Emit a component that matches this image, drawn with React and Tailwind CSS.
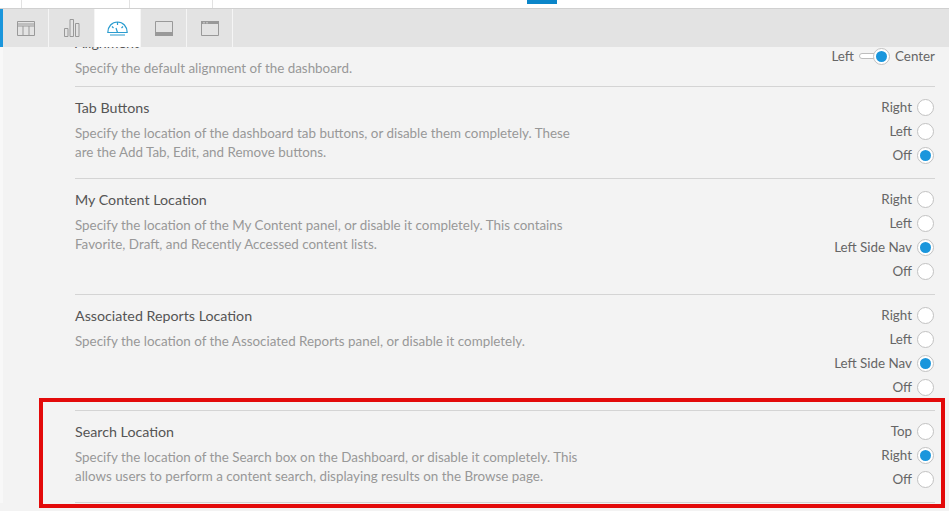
import React from "react";

const Radio = ({ on }) => (
  <span className="flex h-[17px] w-[17px] shrink-0 items-center justify-center rounded-full border border-[#c2c2c2] bg-white">
    {on && <span className="h-[11px] w-[11px] rounded-full bg-[#1a96dc]" />}
  </span>
);

const Row = ({ title, desc, opts, on }) => (
  <div className="flex justify-between border-b border-[#d4d4d4] pt-2 pb-[11px]">
    <div>
      <div className="mt-[3px] text-[14.25px] leading-5 text-[#555]">{title}</div>
      <div className="mt-[6px] w-[505px] text-[13.4px] leading-[19px] text-[#989898]">{desc}</div>
    </div>
    <div className="flex flex-col items-end pr-px">
      {opts.map((o, i) => (
        <div key={o} className="flex h-6 items-center gap-[5px] text-[13.4px] text-[#666]">
          {o}
          <Radio on={i === on} />
        </div>
      ))}
    </div>
  </div>
);

const Tab = ({ active, children }) => (
  <div className={`flex w-[46px] items-center justify-center border-r border-[#f5f5f5] ${active ? "bg-white" : ""}`}>
    {children}
  </div>
);

const stroke = "#999999";

export default function App() {
  return (
    <div className="relative h-[511px] w-[949px] overflow-hidden bg-[#f3f3f3]" style={{ fontFamily: "Lato, sans-serif" }}>
      <div className="relative z-10 flex h-[9px] border-b border-[#d0d0d0] bg-white">
        <div className="w-[22px] border-r border-[#e2e2e2]" />
        <div className="w-[108px] border-r border-[#e2e2e2]" />
        <div className="w-[83px] border-r border-[#e2e2e2]" />
        <div className="ml-[314px] h-1 w-[30px] bg-[#0a85c9]" />
      </div>
      <div className="relative z-10 flex h-[38px] border-l-[3px] border-[#1a96dc] bg-[#e3e3e3]">
        <Tab>
          <svg width="18" height="15" viewBox="0 0 18 15" fill="none" stroke={stroke}>
            <path d="M.5.500h17v14H.5zM.5 3h17M.5 5h17M6 5v9.500M12 5v9.500" />
          </svg>
        </Tab>
        <Tab>
          <svg width="16" height="18" viewBox="0 0 16 18" fill="none" stroke={stroke}>
            <path d="M.5 9.500h3.500v8H.5zM6 .5h3.500v17H6zM11.500 4.500H15v13h-3.500z" />
          </svg>
        </Tab>
        <Tab active>
          <svg width="21" height="15" viewBox="0 0 21 15" fill="none" stroke="#2a9ccf" strokeWidth="1.2">
            <path d="M.8 11.500C.8 5.500 5 1 10.500 1s9.700 4.500 9.700 10.500zM3 14h15M10.500 11.500 9 7M5 5.500l1.500 1.500M16 5.500 14.500 7M10.500 1v3" />
          </svg>
        </Tab>
        <Tab>
          <svg width="18" height="15" viewBox="0 0 18 15" fill="none" stroke={stroke}>
            <path d="M.5.500h17v14H.5z" />
            <path d="M0 11h18v4H0z" fill={stroke} stroke="none" />
          </svg>
        </Tab>
        <Tab>
          <svg width="18" height="15" viewBox="0 0 18 15" fill="none" stroke={stroke}>
            <path d="M.5.500h17v14H.5z" />
            <path d="M0 0h18v3H0z" fill={stroke} stroke="none" />
            <path d="M3 1v1.500M6 1v1.500" stroke="#e3e3e3" />
          </svg>
        </Tab>
      </div>
      <div className="border-l-[3px] border-[#f8f8f8] pl-[72px] pr-[14px]">
        <div className="-mt-[14px] flex h-[54px] justify-between border-b border-[#d4d4d4]">
          <div>
            <div className="text-[14.25px] leading-5 text-[#555]">Alignment</div>
            <div className="mt-[6px] text-[13.4px] leading-[19px] text-[#989898]">Specify the default alignment of the dashboard.</div>
          </div>
          <div className="mt-[14px] flex h-[18px] items-center gap-[5px] text-[13.4px] text-[#666]">
            Left
            <span className="flex items-center">
              <span className="-mr-[2px] h-[6px] w-4 rounded-l-full border border-[#bdbdbd] bg-white" />
              <Radio on />
            </span>
            Center
          </div>
        </div>
        <Row
          title="Tab Buttons"
          desc="Specify the location of the dashboard tab buttons, or disable them completely. These are the Add Tab, Edit, and Remove buttons."
          opts={["Right", "Left", "Off"]}
          on={2}
        />
        <Row
          title="My Content Location"
          desc="Specify the location of the My Content panel, or disable it completely. This contains Favorite, Draft, and Recently Accessed content lists."
          opts={["Right", "Left", "Left Side Nav", "Off"]}
          on={2}
        />
        <Row
          title="Associated Reports Location"
          desc="Specify the location of the Associated Reports panel, or disable it completely."
          opts={["Right", "Left", "Left Side Nav", "Off"]}
          on={2}
        />
        <Row
          title="Search Location"
          desc="Specify the location of the Search box on the Dashboard, or disable it completely. This allows users to perform a content search, displaying results on the Browse page."
          opts={["Top", "Right", "Off"]}
          on={1}
        />
      </div>
      <div className="absolute left-[39px] top-[398px] h-[110px] w-[906px] border-4 border-[#e30a0a]" />
    </div>
  );
}
